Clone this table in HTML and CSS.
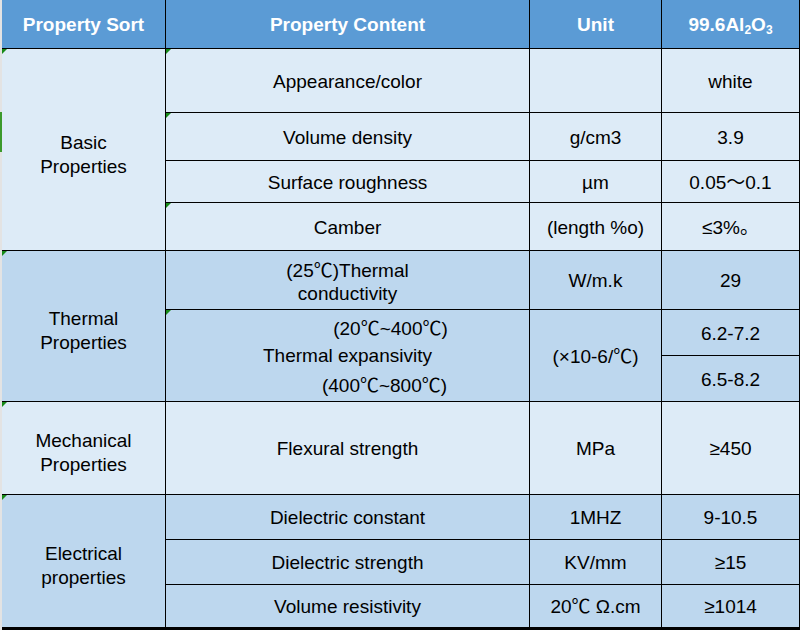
FILE: index.html
```html
<!DOCTYPE html>
<html>
<head>
<meta charset="utf-8">
<link rel="stylesheet" href="styles.css">
</head>
<body>
<div class="page">
  <div class="edge"><div class="edge-green"></div></div>
  <div class="table">
    <div class="cell head">Property Sort</div>
    <div class="cell head">Property Content</div>
    <div class="cell head">Unit</div>
    <div class="cell head"><span>99.6Al<sub>2</sub>O<sub>3</sub></span></div>

    <div class="cell sort light mark r-basic"><div>Basic</div><div>Properties</div></div>
    <div class="cell light mark">Appearance/color</div>
    <div class="cell light"></div>
    <div class="cell light">white</div>

    <div class="cell light mark">Volume density</div>
    <div class="cell light">g/cm3</div>
    <div class="cell light">3.9</div>

    <div class="cell light">Surface roughness</div>
    <div class="cell light">µm</div>
    <div class="cell light">0.05～0.1</div>

    <div class="cell light mark">Camber</div>
    <div class="cell light">(length %o)</div>
    <div class="cell light">≤3%。</div>

    <div class="cell sort dark mark r-thermal"><div>Thermal</div><div>Properties</div></div>
    <div class="cell dark two"><div>(25℃)Thermal</div><div>conductivity</div></div>
    <div class="cell dark">W/m.k</div>
    <div class="cell dark">29</div>

    <div class="cell dark mark r-exp c2 expan">
      <div class="ex1">(20℃~400℃)</div>
      <div class="ex2">Thermal expansivity</div>
      <div class="ex3">(400℃~800℃)</div>
    </div>
    <div class="cell dark r-exp c3">(×10-6/℃)</div>
    <div class="cell dark c4 up">6.2-7.2</div>
    <div class="cell dark c4 down">6.5-8.2</div>

    <div class="cell sort light mark r-mech"><div>Mechanical</div><div>Properties</div></div>
    <div class="cell light">Flexural strength</div>
    <div class="cell light">MPa</div>
    <div class="cell light">≥450</div>

    <div class="cell sort dark mark r-elec"><div>Electrical</div><div>properties</div></div>
    <div class="cell dark">Dielectric constant</div>
    <div class="cell dark">1MHZ</div>
    <div class="cell dark">9-10.5</div>

    <div class="cell dark">Dielectric strength</div>
    <div class="cell dark">KV/mm</div>
    <div class="cell dark">≥15</div>

    <div class="cell dark">Volume resistivity</div>
    <div class="cell dark">20℃ Ω.cm</div>
    <div class="cell dark">≥1014</div>
  </div>
</div>
</body>
</html>
```

FILE: styles.css
```css
html, body {
  margin: 0;
  padding: 0;
  background: #ffffff;
}
body {
  width: 802px;
  height: 630px;
  overflow: hidden;
  font-family: "Liberation Sans", Arial, "Noto Sans CJK SC", sans-serif;
  font-size: 19px;
  color: #000;
}
.page {
  display: flex;
  align-items: flex-start;
}
.edge {
  width: 2px;
  height: 630px;
  background: #e3e3e3;
  flex: none;
}
.edge-green {
  margin-top: 112px;
  height: 40px;
  background: #3c9a2c;
}
.table {
  display: grid;
  grid-template-columns: 163px 363px 131px 137px;
  grid-template-rows: 48px 63px 47px 41px 47px 58px 45px 45px 92px 44px 44px 42px;
  gap: 1px;
  background: #000;
  padding: 0 1px 3px 0;
}
.cell {
  position: relative;
  display: flex;
  flex-direction: column;
  align-items: center;
  justify-content: center;
  text-align: center;
  line-height: 22px;
  white-space: nowrap;
  padding-top: 2px;
}
.head {
  background: #5b9bd5;
  color: #fff;
  font-weight: bold;
  padding-top: 2px;
}
.head sub {
  font-size: 12px;
  vertical-align: -3px;
  line-height: 0;
}
.light { background: #ddebf7; }
.dark { background: #bdd7ee; }
.sort {
  grid-column: 1;
  line-height: 24px;
  padding-top: 10px;
}
.r-basic { grid-row: 2 / 6; }
.r-thermal { grid-row: 6 / 9; }
.r-mech { grid-row: 9 / 10; }
.r-elec { grid-row: 10 / 13; }
.r-exp { grid-row: 7 / 9; }
.c2 { grid-column: 2; }
.c3 { grid-column: 3; }
.c4 { grid-column: 4; }
.up { grid-row: 7; }
.down { grid-row: 8; }
.two {
  line-height: 23px;
  padding-top: 4px;
}
.expan {
  line-height: 27px;
  padding-top: 3px;
}
.ex1 { padding-left: 86px; }
.ex3 { padding-left: 74px; margin-top: 3px; }
.mark::before {
  content: "";
  position: absolute;
  left: 0;
  top: 0;
  width: 0;
  height: 0;
  border-top: 5px solid #178a17;
  border-right: 5px solid transparent;
}
```
